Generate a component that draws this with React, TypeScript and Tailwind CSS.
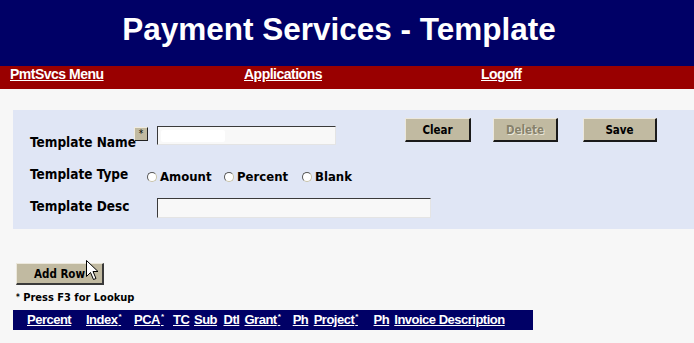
import React from "react";

const cond = "font-['DejaVu_Sans_Condensed','DejaVu_Sans',sans-serif] [font-stretch:semi-condensed] font-bold";
const arial = "font-['Liberation_Sans',Arial,sans-serif] font-bold";

function Radio({ label, w }: { label: string; w?: string }) {
  return (
    <div className={`flex items-start ${w ?? ""}`}>
      <span className="mt-[2px] block w-[10px] h-[10px] rounded-full bg-white border-[1.5px] border-t-[#555] border-l-[#555] border-b-[#c8c2a8] border-r-[#c8c2a8]" />
      <span className="ml-[3px] leading-[14px] text-[13px] text-black">{label}</span>
    </div>
  );
}

function TanButton({ children, w, disabled }: { children: React.ReactNode; w: string; disabled?: boolean }) {
  return (
    <div
      className={`${w} h-[24px] bg-[#c1baa1] border-t border-l border-t-[#ece8dc] border-l-[#ece8dc] border-b-2 border-r-2 border-b-[#1a1a1a] border-r-[#1a1a1a] flex items-center justify-center ${cond} text-[11.5px] leading-[14px] ${
        disabled ? "text-[#87826c] [text-shadow:1px_1px_0_#ebe7da]" : "text-black"
      }`}
    >
      {children}
    </div>
  );
}

function Sup() {
  return <span className="text-[8px] align-super leading-none ml-[1px]">*</span>;
}

export default function App() {
  const cols: { t: React.ReactNode; w: string }[] = [
    { t: "Percent", w: "w-[59px]" },
    { t: <>Index<Sup /></>, w: "w-[48px]" },
    { t: <>PCA<Sup /></>, w: "w-[39px]" },
    { t: "TC", w: "w-[21px]" },
    { t: "Sub", w: "w-[29.5px]" },
    { t: "Dtl", w: "w-[21px]" },
    { t: <>Grant<Sup /></>, w: "w-[48.2px]" },
    { t: "Ph", w: "w-[21px]" },
    { t: <>Project<Sup /></>, w: "w-[59.9px]" },
    { t: "Ph", w: "w-[20.7px]" },
    { t: "Invoice Description", w: "" },
  ];

  return (
    <div className="relative w-[694px] h-[343px] overflow-hidden bg-[#f7f7f7]">
      {/* Title bar */}
      <div className="h-[66px] bg-[#000066] pt-[9px] pr-[16px] text-center">
        <h1 className={`${arial} text-white text-[31.5px] leading-[40px]`}>Payment Services - Template</h1>
      </div>

      {/* Red nav bar */}
      <nav className={`h-[23px] bg-[#990000] grid grid-cols-[244px_237px_1fr] ${arial} text-white text-[14px] leading-[17px] tracking-[-0.5px]`}>
        <div className="pl-[10px]"><a className="underline">PmtSvcs Menu</a></div>
        <div><a className="underline">Applications</a></div>
        <div><a className="underline">Logoff</a></div>
      </nav>

      {/* Form panel */}
      <div className={`mt-[21px] ml-[13px] h-[119px] bg-[#e0e6f5] pl-[17px] pt-[8px] ${cond} text-[13.5px] text-black`}>
        {/* Row 1 */}
        <div className="flex items-start h-[32px]">
          <span className="w-[104px] mt-[17px] leading-[14px] whitespace-nowrap">Template Name</span>
          <div className="w-[14px] h-[14px] mt-[9px] bg-[#c1baa1] border-t border-l border-t-[#f0ece0] border-l-[#f0ece0] border-b border-r border-b-[#222] border-r-[#222] flex items-center justify-center text-[10px] leading-none font-normal text-black">
            *
          </div>
          <div className="ml-[9px] mt-[8px] w-[179px] h-[19px] bg-[#f8f8f8] border-t border-l border-t-[#3a3a3a] border-l-[#3a3a3a] border-b border-r border-b-[#e4e4e4] border-r-[#e4e4e4] flex items-center pl-[3px]">
            <div className="w-[64px] h-[12px] bg-white rounded-[2px]" />
          </div>
          <div className="ml-[69px]"><TanButton w="w-[66px]">Clear</TanButton></div>
          <div className="ml-[22px]"><TanButton w="w-[65px]" disabled>Delete</TanButton></div>
          <div className="ml-[25px]"><TanButton w="w-[74px]">Save</TanButton></div>
        </div>

        {/* Row 2 */}
        <div className="flex items-start h-[34px]">
          <span className="w-[117px] mt-[17px] leading-[14px] whitespace-nowrap">Template Type</span>
          <div className="flex mt-[20px]">
            <Radio label="Amount" w="w-[77px]" />
            <Radio label="Percent" w="w-[78px]" />
            <Radio label="Blank" />
          </div>
        </div>

        {/* Row 3 */}
        <div className="flex items-start">
          <span className="w-[127px] mt-[15px] leading-[14px] whitespace-nowrap">Template Desc</span>
          <div className="mt-[14px] w-[274px] h-[20px] bg-[#f8f8f8] border-t border-l border-t-[#3a3a3a] border-l-[#3a3a3a] border-b border-r border-b-[#e4e4e4] border-r-[#e4e4e4]" />
        </div>
      </div>

      {/* Add Row */}
      <div className="mt-[34px] ml-[16px] w-[88px] h-[22px] bg-[#c1baa1] border-t border-l border-t-[#ece8dc] border-l-[#ece8dc] border-b-2 border-r-2 border-b-[#3a3a3a] border-r-[#3a3a3a] flex items-center justify-center">
        <span className={`${cond} text-[11.5px] leading-[14px] text-black`}>Add Row</span>
      </div>

      <div className={`mt-[6px] ml-[16px] ${cond} text-[11px] leading-[14px] text-black`}>
        <span className="text-[8px] align-top">*</span> Press F3 for Lookup
      </div>

      {/* Table header */}
      <div className={`mt-[5px] ml-[13px] w-[520px] h-[20px] bg-[#000066] flex pl-[14px] ${arial} text-white text-[13px] leading-[20px] tracking-[-0.5px]`}>
        {cols.map((c, i) => (
          <div key={i} className={`${c.w} shrink-0 whitespace-nowrap`}>
            <a className="underline">{c.t}</a>
          </div>
        ))}
      </div>

      {/* Mouse cursor */}
      <svg className="absolute left-[86px] top-[260px]" width="13" height="21" viewBox="0 0 13 21">
        <path
          d="M0.5 0.5 L0.5 16.5 L4.5 12.5 L7.5 19.5 L10 18.5 L7 11.5 L12 11.5 Z"
          fill="#fff"
          stroke="#000"
          strokeWidth="1"
          strokeLinejoin="miter"
        />
      </svg>
    </div>
  );
}
